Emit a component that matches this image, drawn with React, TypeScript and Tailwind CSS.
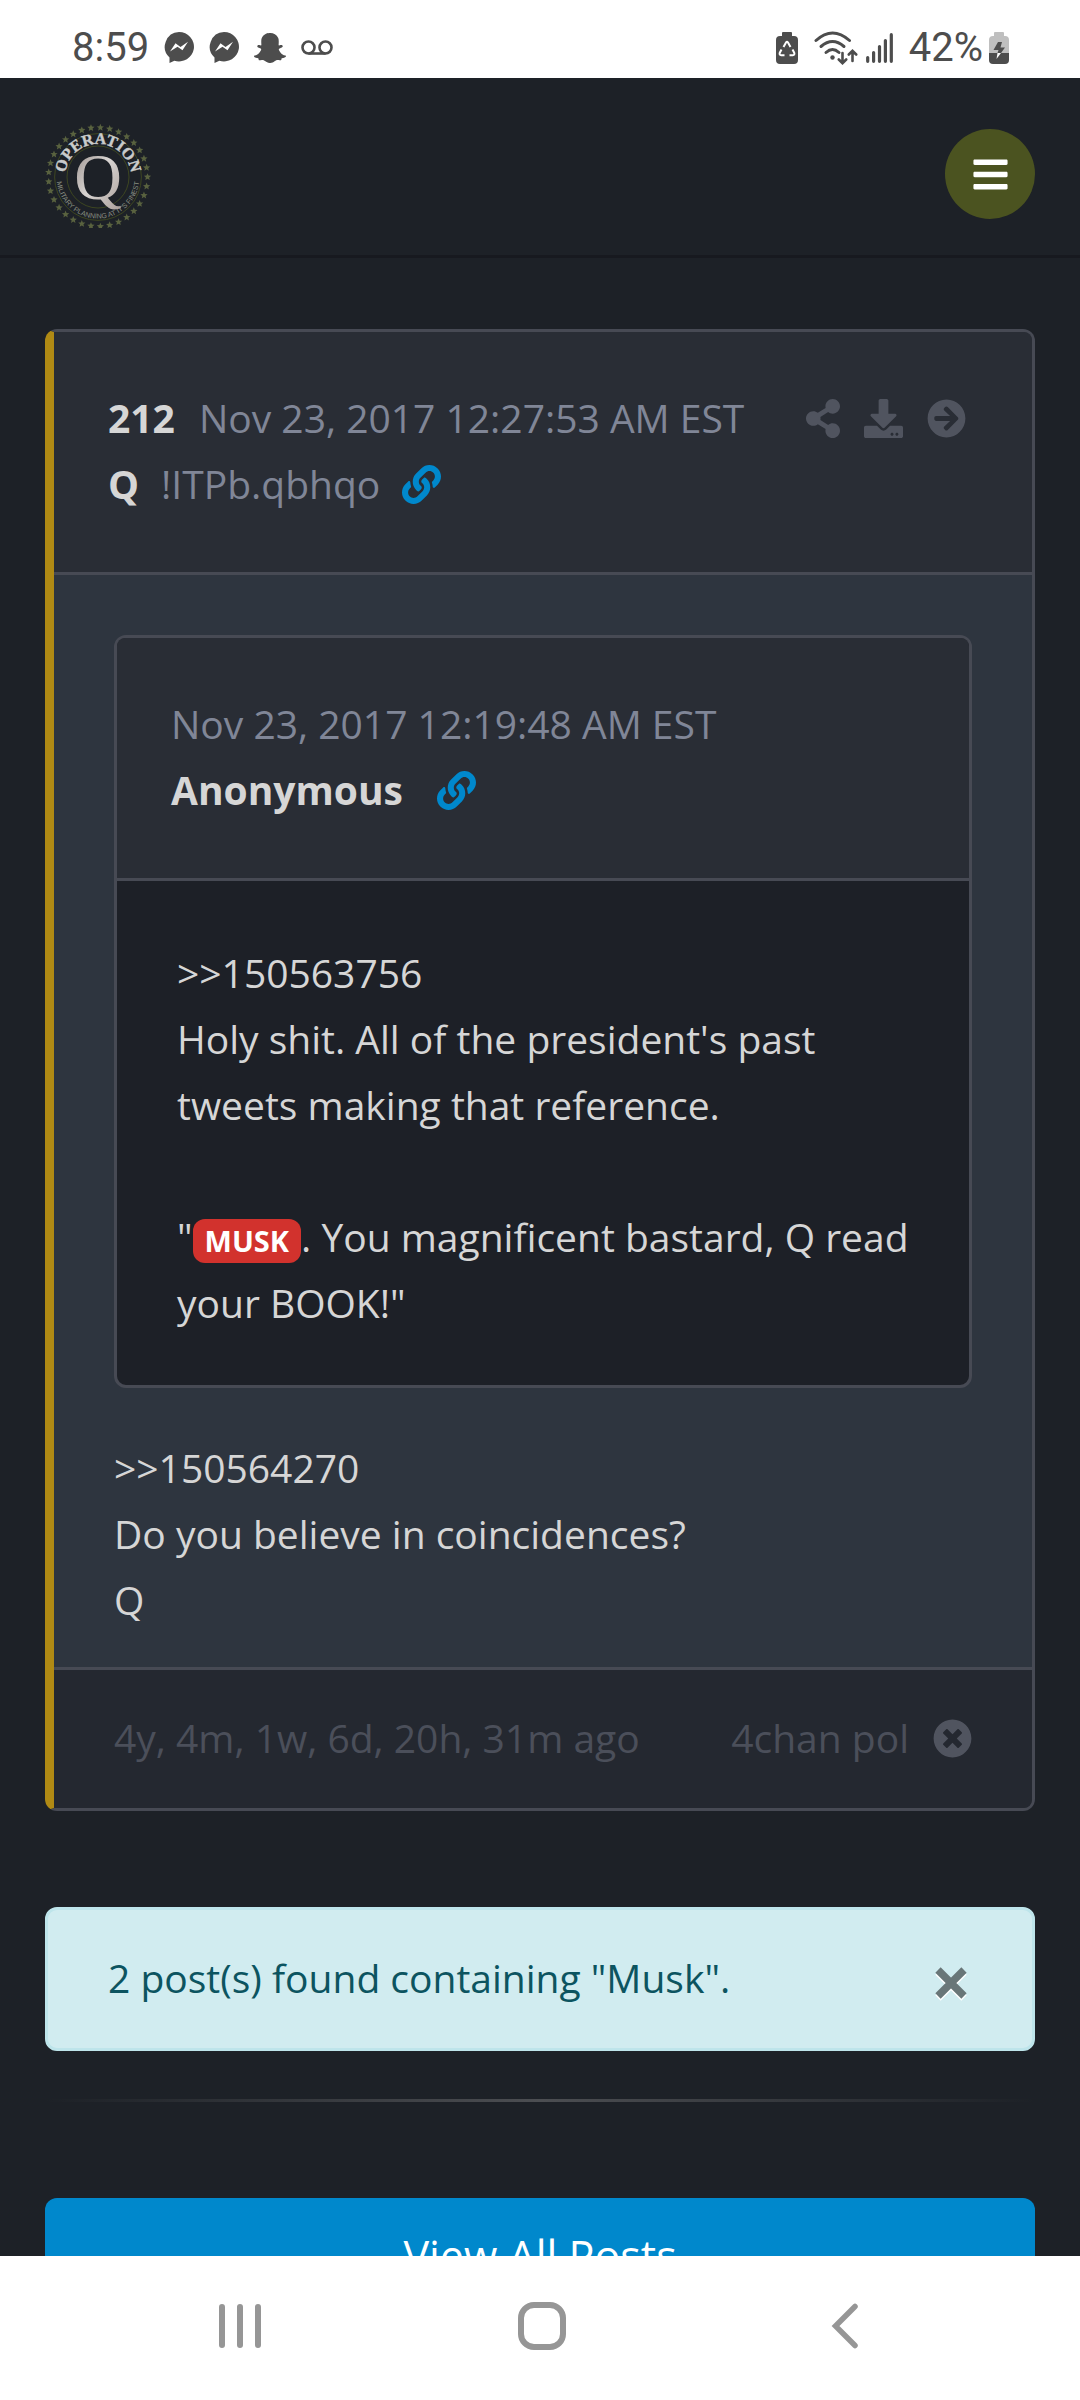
import { FaArrowCircleRight, FaBars, FaDownload, FaLink, FaShareAlt, FaSnapchatGhost, FaTimesCircle } from 'react-icons/fa'

const starCount = 33

function starPoints(cx: number, cy: number, r: number) {
  return Array.from({ length: 10 }, (_, i) => {
    const radius = i % 2 === 0 ? r : r * 0.45
    const a = (Math.PI / 5) * i - Math.PI / 2
    return `${(cx + radius * Math.cos(a)).toFixed(2)},${(cy + radius * Math.sin(a)).toFixed(2)}`
  }).join(' ')
}

function Logo() {
  return (
    <svg width="108" height="108" viewBox="0 0 108 108" aria-hidden="true">
      <defs>
        <path id="arc-top" d="M22 68.300A33 33 0 1 1 84 68.300" />
        <path id="arc-bottom" d="M14 42.800A41.500 41.500 0 1 0 92 42.800" />
        <linearGradient id="silver" x1="0" y1="0" x2="1" y2="1">
          <stop offset="0" stopColor="#8f8580" />
          <stop offset="0.5" stopColor="#d8d4d2" />
          <stop offset="1" stopColor="#a89c96" />
        </linearGradient>
      </defs>
      {Array.from({ length: starCount }, (_, i) => {
        const a = (2 * Math.PI * i) / starCount
        return <polygon key={i} points={starPoints(53 + 49.5 * Math.cos(a), 57 - 49.5 * Math.sin(a), 3.8)} fill="#59623f" />
      })}
      <circle cx="53" cy="57" r="43.4" fill="none" stroke="#3d4621" strokeWidth="1" />
      <circle cx="53" cy="57" r="31" fill="none" stroke="#3d4621" strokeWidth="1" />
      <text className="font-['Liberation_Serif',serif] text-[16px] font-bold" fill="#c9cbcb" stroke="#c9cbcb" strokeWidth="0.4" textAnchor="middle">
        <textPath href="#arc-top" startOffset="50%">OPERATION</textPath>
      </text>
      <text className="font-['Liberation_Sans_Narrow','Liberation_Sans',sans-serif] text-[7px]" fill="#8a8f82" textAnchor="middle">
        <textPath href="#arc-bottom" startOffset="50%">MILITARY PLANNING AT IT&apos;S FINEST</textPath>
      </text>
      <text x="53" y="79" className="font-['Liberation_Serif',serif] text-[66px]" fill="url(#silver)" textAnchor="middle">
        Q
      </text>
    </svg>
  )
}

function MessengerIcon() {
  return (
    <svg width="30" height="31" viewBox="0 0 30 31" aria-hidden="true">
      <path d="M15 0a15 14.700 0 1 1-4.600 28.700L5.500 31V25.600A14.800 14.800 0 0 1 15 0z" fill="#4d4d4d" />
      <path d="M6 19.500l5.500-8.200 5 3.600 7.500-5.200-5.500 8.600-5-3.600z" fill="#fff" />
    </svg>
  )
}

function VoicemailIcon() {
  return (
    <svg width="32" height="16" viewBox="0 0 32 16" fill="none" stroke="#4d4d4d" strokeWidth="2.600" aria-hidden="true">
      <circle cx="7.500" cy="7.500" r="6" />
      <circle cx="24.500" cy="7.500" r="6" />
      <path d="M7.500 13.500h17" />
    </svg>
  )
}

function BatterySaverIcon() {
  return (
    <svg width="22" height="32" viewBox="0 0 22 32" aria-hidden="true">
      <path d="M7 0h8q1 0 1 1v3h2q4 0 4 4v20q0 4-4 4H4q-4 0-4-4V8q0-4 4-4h2V1q0-1 1-1z" fill="#4d4d4d" />
      <g fill="none" stroke="#fff" strokeWidth="2">
        <path d="M7.500 15l2.500-4.500q1-1.500 2 0l2.500 4.500" />
        <path d="M16.500 17.500l1.700 3.200q.8 2.300-1.500 2.600h-3.200" />
        <path d="M5.500 17.500l-1.700 3.200q-.8 2.300 1.500 2.600h3.200" />
      </g>
    </svg>
  )
}

function WifiIcon() {
  return (
    <svg width="44" height="34" viewBox="0 0 44 34" fill="none" stroke="#4d4d4d" strokeWidth="3" strokeLinecap="round" aria-hidden="true">
      <path d="M2 9.500Q18.500-5.500 35.500 9.500" />
      <path d="M7 15.500q11.500-10 23 0" />
      <path d="M12 21.500q6.500-6 13 0" />
      <circle cx="18.500" cy="26.500" r="2.200" fill="#4d4d4d" stroke="none" />
      <path d="M28.500 22v9.500M24.800 28.500l3.700 3.700 3.700-3.700M38.500 30V20.500M34.800 23.500l3.700-3.700 3.700 3.700" strokeWidth="2.600" />
    </svg>
  )
}

function SignalIcon() {
  return (
    <svg width="27" height="30" viewBox="0 0 27 30" stroke="#4d4d4d" strokeWidth="3.200" strokeLinecap="round" aria-hidden="true">
      <path d="M1.700 24.500v3.800M7.600 19.500v8.800M13.500 13.500v14.800M19.400 7.500v20.800M25.300 1.700v26.600" />
    </svg>
  )
}

function BatteryIcon() {
  return (
    <svg width="20" height="32" viewBox="0 0 20 32" aria-hidden="true">
      <path d="M6 0h8q1 0 1 1v3h1q4 0 4 4v13H0V8q0-4 4-4h1V1q0-1 1-1z" fill="#bfbfbf" />
      <path d="M0 21h20v7q0 4-4 4H4q-4 0-4-4z" fill="#4d4d4d" />
      <path d="M9 10h4l-1.500 5.500H16L12 21H8.500l1-3H4.500z" fill="#4d4d4d" />
      <path d="M8.500 21H12l-4.500 6z" fill="#fff" />
    </svg>
  )
}

function StatusBar() {
  return (
    <div className="flex h-[78px] shrink-0 items-center justify-between bg-white pt-[17px] pr-[71px] pl-[72px] font-[Roboto,sans-serif] text-[40px] leading-none text-[#4d4d4d]">
      <div className="flex items-center gap-[15px]">
        <span>8:59</span>
        <MessengerIcon />
        <MessengerIcon />
        <FaSnapchatGhost size={32} />
        <VoicemailIcon />
      </div>
      <div className="flex items-center">
        <BatterySaverIcon />
        <span className="ml-4 flex">
          <WifiIcon />
        </span>
        <span className="mr-4 ml-2 flex">
          <SignalIcon />
        </span>
        <span className="mr-[6px]">42%</span>
        <BatteryIcon />
      </div>
    </div>
  )
}

function SiteHeader() {
  return (
    <header className="flex shrink-0 items-center justify-between border-b-3 border-[#17191f] px-[45px] pt-[42px] pb-[27px]">
      <a href="#home" aria-label="Home">
        <Logo />
      </a>
      <button type="button" aria-label="Menu" className="flex size-[90px] items-center justify-center rounded-full bg-[#4b5320] text-white">
        <FaBars size={39} />
      </button>
    </header>
  )
}

function QuotedPost() {
  return (
    <article className="rounded-xl border-3 border-[#474a54] bg-[#1d2027]">
      <header className="rounded-t-lg border-b-3 border-[#474a54] bg-[#292d35] px-[54px] pt-[53px] pb-[55px]">
        <time className="block text-[#808697]">Nov 23, 2017 12:19:48 AM EST</time>
        <div className="flex items-center gap-[34px]">
          <strong>Anonymous</strong>
          <a href="#quoted" aria-label="Link to quoted post" className="text-[#0088cc]">
            <FaLink size={39} />
          </a>
        </div>
      </header>
      <div className="pt-[59px] pr-[54px] pb-[49px] pl-[60px]">
        <p>&gt;&gt;150563756</p>
        <p>Holy shit. All of the president&apos;s past tweets making that reference.</p>
        <br />
        <p>
          &quot;
          <mark className="inline-block rounded-xl bg-[#d2322d] px-3 py-[7px] align-baseline text-[29px] leading-[30px] font-bold text-white">MUSK</mark>
          . You magnificent bastard, Q read your BOOK!&quot;
        </p>
      </div>
    </article>
  )
}

function Post() {
  return (
    <article className="rounded-xl border-3 border-l-9 border-[#474a54] border-l-[#b08a14] bg-[#2e353f]">
      <header className="flex items-start justify-between rounded-tr-lg border-b-3 border-[#474a54] bg-[#292d35] pt-[53px] pr-[66px] pb-[55px] pl-[54px]">
        <div>
          <div className="flex gap-6">
            <strong>212</strong>
            <time className="text-[#808697]">Nov 23, 2017 12:27:53 AM EST</time>
          </div>
          <div className="flex items-center gap-[22px]">
            <strong>Q</strong>
            <span className="text-[#808697]">!ITPb.qbhqo</span>
            <a href="#post-212" aria-label="Link to post" className="text-[#0088cc]">
              <FaLink size={39} />
            </a>
          </div>
        </div>
        <div className="flex h-[66px] items-center gap-6 text-[#50545f]">
          <button type="button" aria-label="Share">
            <FaShareAlt className="h-[39px] w-[34px]" />
          </button>
          <button type="button" aria-label="Download">
            <FaDownload size={39} />
          </button>
          <a href="#212" aria-label="Open post">
            <FaArrowCircleRight size={39} />
          </a>
        </div>
      </header>
      <div className="px-[60px] pt-[60px] pb-[34px]">
        <QuotedPost />
        <div className="mt-[47px]">
          <p>&gt;&gt;150564270</p>
          <p>Do you believe in coincidences?</p>
          <p>Q</p>
        </div>
      </div>
      <footer className="flex items-center justify-between rounded-br-lg border-t-3 border-[#474a54] bg-[#242830] px-[60px] pt-[35px] pb-[37px] text-[#4b4f5a]">
        <span>4y, 4m, 1w, 6d, 20h, 31m ago</span>
        <span className="flex items-center gap-6">
          4chan pol
          <FaTimesCircle size={39} className="text-[#50545f]" />
        </span>
      </footer>
    </article>
  )
}

function SearchAlert() {
  return (
    <div role="status" className="mt-24 flex items-center justify-between rounded-xl border-3 border-[#bee5eb] bg-[#d1ecf0] pt-[35px] pr-[65px] pb-[37px] pl-[60px] text-[#0c5460]">
      <span>2 post(s) found containing &quot;Musk&quot;.</span>
      <button type="button" aria-label="Close" className="pt-3">
        <svg width="32" height="34" viewBox="0 0 32 34" strokeWidth="7.500" aria-hidden="true">
          <path d="M3 5l26 26M29 5L3 31" stroke="#fff" />
          <path d="M3 3l26 26M29 3L3 29" stroke="#697678" />
        </svg>
      </button>
    </div>
  )
}

function NavBar() {
  return (
    <nav className="grid h-36 shrink-0 grid-cols-3 items-center bg-white pr-[84px] pl-[89px] pb-1">
      <button type="button" aria-label="Recent apps" className="flex justify-center">
        <svg width="42" height="46" viewBox="0 0 42 46" stroke="#969696" strokeWidth="6" strokeLinecap="round" aria-hidden="true">
          <path d="M3 4v38M21 4v38M39 4v38" />
        </svg>
      </button>
      <button type="button" aria-label="Home screen" className="flex justify-center">
        <svg width="48" height="48" viewBox="0 0 48 48" aria-hidden="true">
          <rect x="3" y="3" width="42" height="42" rx="13" fill="none" stroke="#969696" strokeWidth="6" />
        </svg>
      </button>
      <button type="button" aria-label="Back" className="flex justify-center">
        <svg width="28" height="46" viewBox="0 0 28 46" fill="none" stroke="#969696" strokeWidth="5.500" strokeLinecap="round" aria-hidden="true">
          <path d="M24 3.500L4.500 23 24 42.500" />
        </svg>
      </button>
    </nav>
  )
}

export default function App() {
  return (
    <div className="flex h-screen flex-col bg-[#1d2127] font-['Open_Sans',sans-serif] text-[39px] leading-[66px] text-[#d6d6d6]">
      <StatusBar />
      <SiteHeader />
      <main className="min-h-0 flex-1 overflow-hidden px-[45px] pt-[71px]">
        <Post />
        <SearchAlert />
        <hr className="mt-12 h-[3px] border-0 bg-linear-to-r from-transparent via-[#4c4e52] to-transparent" />
        <button type="button" className="mt-24 w-full rounded-xl bg-[#0088cc] px-9 py-[25px] text-[43px] text-white">
          View All Posts
        </button>
      </main>
      <NavBar />
    </div>
  )
}
